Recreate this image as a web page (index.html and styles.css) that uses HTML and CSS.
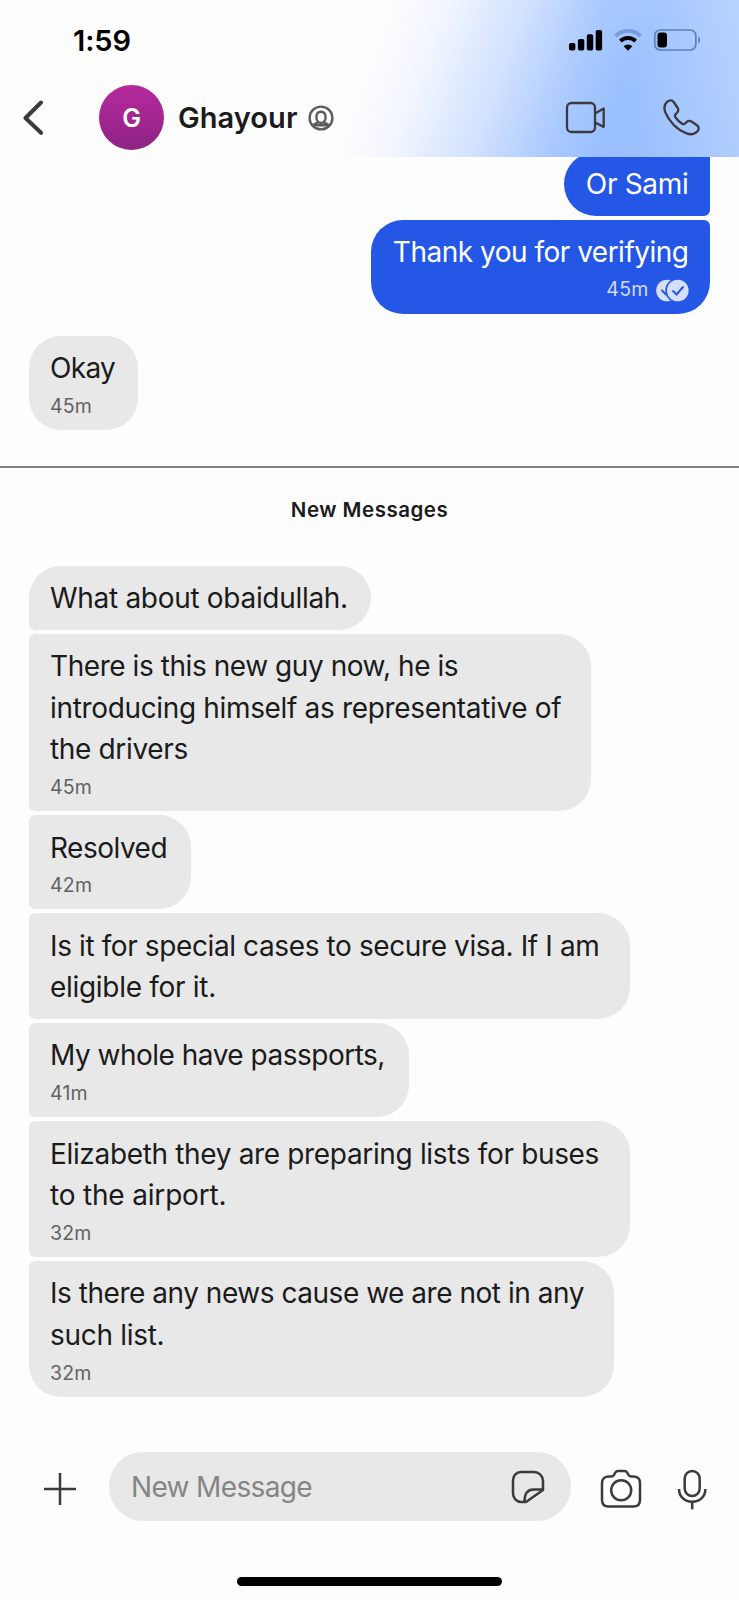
FILE: index.html
```html
<!DOCTYPE html>
<html lang="en">
<head>
<meta charset="utf-8">
<title>Ghayour</title>
<link rel="stylesheet" href="styles.css">
</head>
<body>
<div class="screen">
  <header class="top">
    <div class="status">
      <span class="clock">1:59</span>
      <svg class="status-icons" width="133" height="24" viewBox="0 0 133 24">
        <rect x="0" y="14" width="6.4" height="7.600" rx="1.800"/>
        <rect x="8.900" y="10" width="6.400" height="11.600" rx="1.800"/>
        <rect x="17.800" y="5.300" width="6.400" height="16.300" rx="1.800"/>
        <rect x="26.700" y="1" width="6.400" height="20.600" rx="1.800"/>
        <path d="M46.600 7a17.500 17.500 0 0 1 24.800 0" fill="none" stroke="#7a9be0" stroke-width="4"/>
        <path d="M51.400 12.100a11 11 0 0 1 15.200 0" fill="none" stroke="#000" stroke-width="4"/>
        <path d="M54.600 17.300a6.400 6.400 0 0 1 8.800 0L59 21.800z"/>
        <rect x="85.800" y="1" width="41" height="20" rx="5.500" fill="none" stroke="#5f7fb8" stroke-width="1.700"/>
        <rect x="88.500" y="3.600" width="9.500" height="15" rx="3"/>
        <path d="M129.200 7.500a4.200 4.200 0 0 1 0 7.200z" fill="#5f7fb8"/>
      </svg>
    </div>
    <div class="nav">
      <svg class="back" width="22" height="36" viewBox="0 0 22 36"><path d="M19 2.500L3.500 18 19 32.800" fill="none" stroke="#3b3b3b" stroke-width="4" stroke-linecap="round" stroke-linejoin="round"/></svg>
      <div class="avatar">G</div>
      <h1 class="name">Ghayour</h1>
      <svg class="person" width="26" height="26" viewBox="0 0 26 26" fill="none" stroke="#5c5c5c" stroke-width="2.400">
        <circle cx="13" cy="13" r="11.400"/>
        <path d="M13 6.700c3 0 4.600 2.300 4.600 5.300s-1.800 6-4.600 6-4.600-3-4.600-6 1.600-5.300 4.600-5.300z"/>
        <path d="M5.500 20c1.500-1.400 3-1.700 4.800-2.300M20.500 20c-1.500-1.400-3-1.700-4.800-2.300M5.500 20.200h15"/>
      </svg>
      <svg class="video" width="42" height="34" viewBox="0 0 42 34" fill="none" stroke="#3b3b3b" stroke-width="2.300" stroke-linejoin="round">
        <rect x="2" y="2" width="28" height="29" rx="4.500"/>
        <path d="M30 12.500l8.700-5v18.400l-8.700-4.400"/>
      </svg>
      <svg class="phone" width="37" height="37" viewBox="0 0 38 38" fill="none" stroke="#3b3b3b" stroke-width="2.400" stroke-linejoin="round">
        <path d="M4.500 2.800C6.800.8 9.300.9 11 3.200l4 5.800c1 1.600.9 3.200-.3 4.700l-1.900 2.200c-.7.900-.7 1.700-.1 2.700 1.800 2.800 4.200 5.100 7 6.800 1 .6 1.900.5 2.700-.2l2.100-1.800c1.500-1.200 3.100-1.300 4.700-.3l5.700 3.800c2.300 1.600 2.400 4 .5 6.200-3 3.300-7 3.800-11.200 2.200C14.500 31.700 6.200 23.200 2.300 13.500.800 9.300 1.200 5.700 4.500 2.800z"/>
      </svg>
    </div>
  </header>

  <main class="thread">
    <div class="msg out first"><p>Or Sami</p></div>
    <div class="msg out last">
      <p class="tight-3">Thank you for verifying</p>
      <div class="meta">45m
        <svg width="33" height="23" viewBox="0 0 33 23">
          <circle cx="11" cy="11.500" r="10.800" fill="#d5defa"/>
          <path d="M5.500 11l5 5" stroke="#2457e6" stroke-width="2" fill="none"/>
          <circle cx="21.500" cy="11.500" r="12.200" fill="#2457e6"/>
          <circle cx="21.800" cy="11.500" r="10.800" fill="#d5defa"/>
          <path d="M16.500 11.500l4 4 7-8" stroke="#2457e6" stroke-width="2" fill="none"/>
        </svg>
      </div>
    </div>
    <div class="msg in single w-okay"><p class="tight-4">Okay</p><div class="meta">45m</div></div>

    <div class="divider"></div>
    <div class="divider-label">New Messages</div>

    <div class="msg in first w-what"><p>What about obaidullah.</p></div>
    <div class="msg in w-there"><p><span class="tight-2">There is this new guy now, he is</span><br><span class="tight-1">introducing himself as representative of</span><br><span class="tight-1">the drivers</span></p><div class="meta">45m</div></div>
    <div class="msg in w-resolved"><p class="tight-3">Resolved</p><div class="meta">42m</div></div>
    <div class="msg in w-wide"><p><span class="tight-15">Is it for special cases to secure visa. If I am</span><br>eligible for it.</p></div>
    <div class="msg in w-pass"><p class="tight-3">My whole have passports,</p><div class="meta">41m</div></div>
    <div class="msg in w-wide"><p><span class="tight-1">Elizabeth they are preparing lists for buses</span><br><span class="loose">to the airport.</span></p><div class="meta">32m</div></div>
    <div class="msg in last w-news"><p><span class="tight-25">Is there any news cause we are not in any</span><br>such list.</p><div class="meta">32m</div></div>
  </main>

  <footer class="composer">
    <svg class="plus" width="34" height="34" viewBox="0 0 34 34"><path d="M17 1v32M1 17h32" stroke="#3b3b3b" stroke-width="2.500"/></svg>
    <div class="field">
      <span>New Message</span>
      <svg width="34" height="34" viewBox="0 0 34 34" fill="none" stroke="#3b3b3b" stroke-width="2.500" stroke-linejoin="round">
        <path d="M10 2h13a9 9 0 0 1 9 9v9L15 32h-4.500A8.500 8.500 0 0 1 2 23.500V10a8 8 0 0 1 8-8z"/>
        <path d="M32 19.500h-9.500c-6 0-9 4-9 12.300"/>
      </svg>
    </div>
    <svg class="camera" width="42" height="40" viewBox="0 0 42 40" fill="none" stroke="#3b3b3b" stroke-width="2.500" stroke-linejoin="round">
      <path d="M9 7.500h2c1.500 0 2.200-.3 3-1.600l1.300-2.300C16 2.400 16.800 2 18 2h6.500c1.200 0 2 .4 2.700 1.600l1.300 2.300c.8 1.300 1.500 1.600 3 1.600h1.700C37.500 7.500 40 10 40 14.200V31c0 4.500-2.200 6.500-6.500 6.500h-25C4.200 37.500 2 35.500 2 31V14.200C2 10 4.800 7.500 9 7.500z"/>
      <circle cx="21.200" cy="21.300" r="10"/>
    </svg>
    <svg class="mic" width="30" height="41" viewBox="0 0 30 41" fill="none" stroke="#3b3b3b" stroke-width="2.500">
      <rect x="7.700" y="2" width="15" height="25" rx="7.500"/>
      <path d="M2 20c0 7.500 5.500 12.700 13.200 12.700S28.400 27.500 28.400 20M15.200 32.700v7.500"/>
    </svg>
  </footer>
  <div class="home"></div>
</div>
</body>
</html>
```
FILE: styles.css
```css
* { box-sizing: border-box; }
body { margin: 0; background: #fdfdfd; font-family: Inter, "Noto Sans", sans-serif; color: #1b1b1b; }
p, h1 { margin: 0; }
svg { display: block; flex: none; }
.screen { width: 739px; height: 1600px; overflow: hidden; display: flex; flex-direction: column; }

.top {
  height: 157px; flex: none;
  background:
    linear-gradient(76deg, rgba(190,215,255,0) 82%, rgba(190,215,255,.8) 100%),
    linear-gradient(110deg, #fdfdfd 49%, #f2f6ff 56%, #d3e2ff 66%, #a9c9ff 76%, #99bfff 83%, #9bc0ff 100%);
}
.status { height: 58px; padding: 29px 37px 0 73px; display: flex; justify-content: space-between; }
.clock { font-size: 29px; font-weight: 600; line-height: 24px; color: #000; letter-spacing: -.1px; }
.nav { height: 99px; display: flex; align-items: center; padding-top: 20px; }
.back { margin-left: 22px; }
.avatar { width: 65px; height: 65px; margin-left: 55px; border-radius: 50%; background: linear-gradient(#b52b9c, #8f2285); color: #fff; font-size: 25px; font-weight: 600; display: grid; place-items: center; }
.name { margin-left: 14px; font-size: 29px; font-weight: 600; line-height: 40px; letter-spacing: .05px; width: 119px; white-space: nowrap; }
.person { margin-left: 11px; }
.video { margin-left: 231px; }
.phone { margin-left: 56px; }

.thread { height: 1258px; flex: none; padding: 0 29px; display: flex; flex-direction: column; align-items: flex-start; gap: 4px; margin-top: -5px; clip-path: inset(5px 0 0 0); }
.msg { flex: none; padding: 12.300px 21.500px 9.900px 21px; border-radius: 6px 32px 32px 6px; background: #e8e8e8; white-space: nowrap; font-size: 28px; line-height: 41.700px; letter-spacing: -.3px; }
.msg.first { border-top-left-radius: 32px; }
.msg.last { border-bottom-left-radius: 32px; }
.msg.single { border-radius: 32px; margin-top: 18px; }
.msg.out { align-self: flex-end; background: #2457e6; color: #fff; border-radius: 32px 6px 6px 32px; padding-left: 22px; }
.msg.out.last { border-bottom-right-radius: 32px; }
.meta { height: 30.300px; font-size: 19.500px; line-height: 33.400px; letter-spacing: .2px; color: #626262; display: flex; }
.out .meta { color: #d0dbfa; justify-content: flex-end; align-items: center; gap: 7px; padding-top: 2px; }

.loose { letter-spacing: -.18px; }
.tight-1 { letter-spacing: -.34px; }
.tight-15 { letter-spacing: -.39px; }
.tight-2 { letter-spacing: -.44px; }
.tight-25 { letter-spacing: -.47px; }
.tight-3 { letter-spacing: -.5px; }
.tight-4 { letter-spacing: -.7px; }

.w-okay { width: 108.500px; }
.w-what { width: 342px; }
.w-there { width: 562px; }
.w-resolved { width: 162px; }
.w-wide { width: 601px; }
.w-pass { width: 380px; }
.w-news { width: 585px; }

.divider { width: 739px; height: 2px; margin: 32px 0 0 -29px; background: #808080; flex: none; }
.divider-label { align-self: center; height: 30px; line-height: 30px; margin: 23px 0 36.500px; font-size: 20.500px; font-weight: 600; letter-spacing: .5px; flex: none; }

.composer { height: 143px; flex: none; display: flex; align-items: flex-start; padding-top: 42px; }
.plus { margin: 20px 0 0 43px; }
.field { width: 462px; height: 69px; margin-left: 32px; border-radius: 34px; background: #e8e8e8; display: flex; justify-content: space-between; align-items: center; padding: 0 26px 0 22px; color: #858585; font-size: 28px; letter-spacing: -.65px; }
.camera { margin: 17px 0 0 29px; }
.mic { margin: 17px 0 0 35px; }
.home { width: 265px; height: 9px; border-radius: 5px; background: #000; margin: 24px auto 0; flex: none; }
```
